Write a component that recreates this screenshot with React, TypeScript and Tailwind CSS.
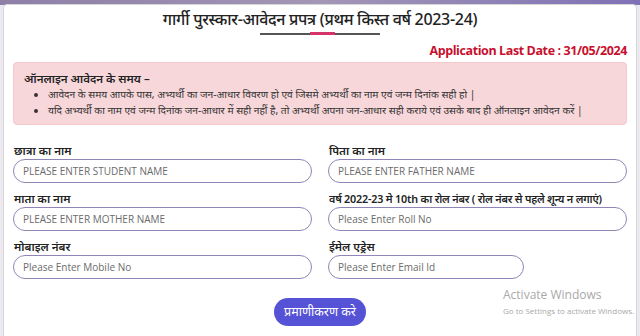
import React from 'react';

const Field: React.FC<{ label: string; placeholder: string; narrow?: boolean; tight?: boolean }> = ({ label, placeholder, narrow, tight }) => (
  <div className="flex flex-col">
    <label
      className={`leading-[16px] font-semibold text-[#222] pl-[1px] whitespace-nowrap ${tight ? 'text-[10.8px] tracking-[-0.2px]' : 'text-[11.5px]'}`}
    >
      {label}
    </label>
    <input
      readOnly
      placeholder={placeholder}
      className={`h-[24px] rounded-full border-[1.5px] border-[#9085b8] bg-white px-[9px] text-[10px] placeholder-[#6b6b6b] font-['Open_Sans',sans-serif] outline-none ${narrow ? 'w-[196px]' : 'w-full'}`}
    />
  </div>
);

export default function App() {
  return (
    <div className="w-[640px] h-[336px] overflow-hidden bg-[#eceaf0] relative font-['Noto_Sans','Liberation_Sans',sans-serif]">
      <div className="h-[5px] bg-gradient-to-r from-[#8d7fa6] via-[#a396b6] to-[#7f71b5]" />
      <div className="mx-[3px] -mt-[1px] h-[340px] bg-white rounded-t-[4px] border border-[#d6d6d6] px-[8px]">
        <div className="flex flex-col items-center pt-[3px]">
          <h1 className="text-[16px] leading-[22px] text-[#222] font-medium tracking-[-0.3px]">
            गार्गी पुरस्कार-आवेदन प्रपत्र (प्रथम किस्त वर्ष 2023-24)
          </h1>
          <div className="relative mt-[3px] w-[120px] h-[2px] bg-[#555]">
            <div className="absolute left-[50px] -top-[1px] w-[25px] h-[3px] bg-[#d6336c]" />
          </div>
        </div>
        <div className="flex justify-end pr-[1px] mt-[7px]">
          <span className="text-[12.5px] leading-[18px] font-bold text-[#c8102e] font-['Open_Sans',sans-serif] tracking-[-0.4px]">
            Application Last Date : 31/05/2024
          </span>
        </div>
        <div className="mt-[2px] mx-[1px] rounded-[4px] bg-[#f8d7da] border border-[#f3c9cd] px-[10px] pt-[8px] pb-[6px] text-[#333]">
          <div className="text-[11.5px] leading-[15px] font-semibold text-[#222]">ऑनलाइन आवेदन के समय –</div>
          <ul className="list-disc pl-[24px] text-[10.2px] leading-[16px]">
            <li>आवेदन के समय आपके पास, अभ्यर्थी का जन-आधार विवरण हो एवं जिसमे अभ्यर्थी का नाम एवं जन्म दिनांक सही हो |</li>
            <li>यदि अभ्यर्थी का नाम एवं जन्म दिनांक जन-आधार में सही नहीं है, तो अभ्यर्थी अपना जन-आधार सही कराये एवं उसके बाद ही ऑनलाइन आवेदन करें |</li>
          </ul>
        </div>
        <div className="grid grid-cols-2 gap-x-[16px] gap-y-[8px] mt-[18px] px-[1px]">
          <Field label="छात्रा का नाम" placeholder="PLEASE ENTER STUDENT NAME" />
          <Field label="पिता का नाम" placeholder="PLEASE ENTER FATHER NAME" />
          <Field label="माता का नाम" placeholder="PLEASE ENTER MOTHER NAME" />
          <Field label="वर्ष 2022-23 मे 10th का रोल नंबर ( रोल नंबर से पहले शून्य न लगाएं)" placeholder="Please Enter Roll No" tight />
          <Field label="मोबाइल नंबर" placeholder="Please Enter Mobile No" />
          <Field label="ईमेल एड्रेस" placeholder="Please Enter Email Id" narrow />
        </div>
        <div className="flex justify-center mt-[19px]">
          <button className="h-[28px] px-[10px] rounded-full bg-[#5552d6] text-white text-[12.5px] leading-[18px]">
            प्रमाणीकरण करे
          </button>
        </div>
      </div>
      <div className="absolute left-[503px] top-[287px] text-[#a9a9a9] font-['Open_Sans',sans-serif]">
        <div className="text-[12px] leading-[16px]">Activate Windows</div>
        <div className="text-[8px] leading-[12px] mt-[2px]">Go to Settings to activate Windows.</div>
      </div>
    </div>
  );
}
